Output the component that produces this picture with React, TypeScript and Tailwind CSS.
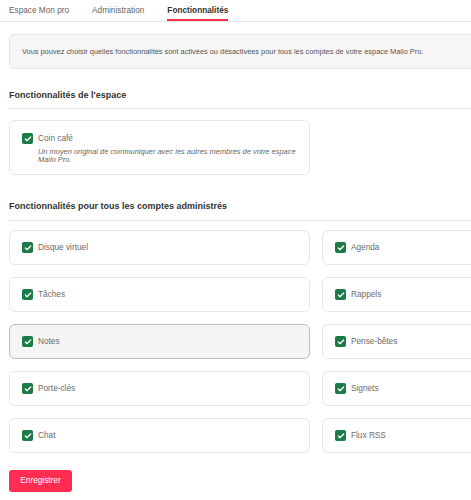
import { Check } from "lucide-react";

const features: [string, string][] = [
  ["Disque virtuel", "Agenda"],
  ["Tâches", "Rappels"],
  ["Notes", "Pense-bêtes"],
  ["Porte-clés", "Signets"],
  ["Chat", "Flux RSS"],
];

function Box() {
  return (
    <span className="flex h-[11px] w-[11px] shrink-0 items-center justify-center rounded-[2px] bg-[#1b7a46]">
      <Check className="h-[8px] w-[8px] text-white" strokeWidth={4} />
    </span>
  );
}

function FeatureCard({ label, hover }: { label: string; hover?: boolean }) {
  return (
    <div
      className={`flex h-[35px] items-center gap-[5px] rounded-[6px] border px-[12px] ${
        hover ? "border-[#bdbdbd] bg-[#f5f5f5]" : "border-[#e6e6e6] bg-white"
      }`}
    >
      <Box />
      <span className="text-[8.25px] leading-[10px] text-[#6b6b6b]">{label}</span>
    </div>
  );
}

export default function App() {
  return (
    <div className="h-[500px] w-[471px] overflow-hidden bg-white font-['Liberation_Sans',Arial,sans-serif]">
      <div className="w-[632px]">
        <div className="flex gap-[23px] border-b border-[#e6e6e6] px-[9px] pt-[6px]">
          <div className="pb-[5px] text-[8.25px] leading-[10px] text-[#666]">Espace Mon pro</div>
          <div className="pb-[5px] text-[8.25px] leading-[10px] text-[#666]">Administration</div>
          <div className="border-b-2 border-[#f5304f] pb-[3px] text-[8.25px] font-bold leading-[10px] text-[#333]">
            Fonctionnalités
          </div>
        </div>

        <div className="px-[9px]">
          <div className="mt-[12px] flex h-[35px] items-center rounded-[5px] border border-[#e6e6e6] bg-[#f6f6f6] px-[12px] text-[7.4px] text-[#555]">
            Vous pouvez choisir quelles fonctionnalités sont activées ou désactivées pour tous les comptes de votre espace Mailo Pro.
          </div>

          <h2 className="mt-[21px] border-b border-[#e0e0e0] pb-[8px] text-[9px] font-bold leading-[10px] text-[#333]">
            Fonctionnalités de l'espace
          </h2>

          <div className="mt-[11px] h-[55px] w-[301px] rounded-[6px] border border-[#e6e6e6] px-[12px] pt-[12px]">
            <div className="flex items-center gap-[5px]">
              <Box />
              <span className="text-[8.25px] leading-[10px] text-[#6b6b6b]">Coin café</span>
            </div>
            <p className="mr-[-6px] mt-[4px] pl-[16px] text-[7.45px] italic leading-[8px] text-[#666]">
              Un moyen original de communiquer avec les autres membres de votre espace Mailo Pro.
            </p>
          </div>

          <h2 className="mt-[26px] border-b border-[#e0e0e0] pb-[9px] text-[9px] font-bold leading-[10px] text-[#333]">
            Fonctionnalités pour tous les comptes administrés
          </h2>

          <div className="mt-[9px] grid grid-cols-2 gap-x-[12px] gap-y-[12px]">
            {features.map(([a, b]) => [
              <FeatureCard key={a} label={a} hover={a === "Notes"} />,
              <FeatureCard key={b} label={b} />,
            ])}
          </div>

          <button className="mt-[17px] h-[22px] w-[63px] rounded-[3px] bg-[#ff2d52] text-[8.25px] text-white">
            Enregistrer
          </button>
        </div>
      </div>
    </div>
  );
}
